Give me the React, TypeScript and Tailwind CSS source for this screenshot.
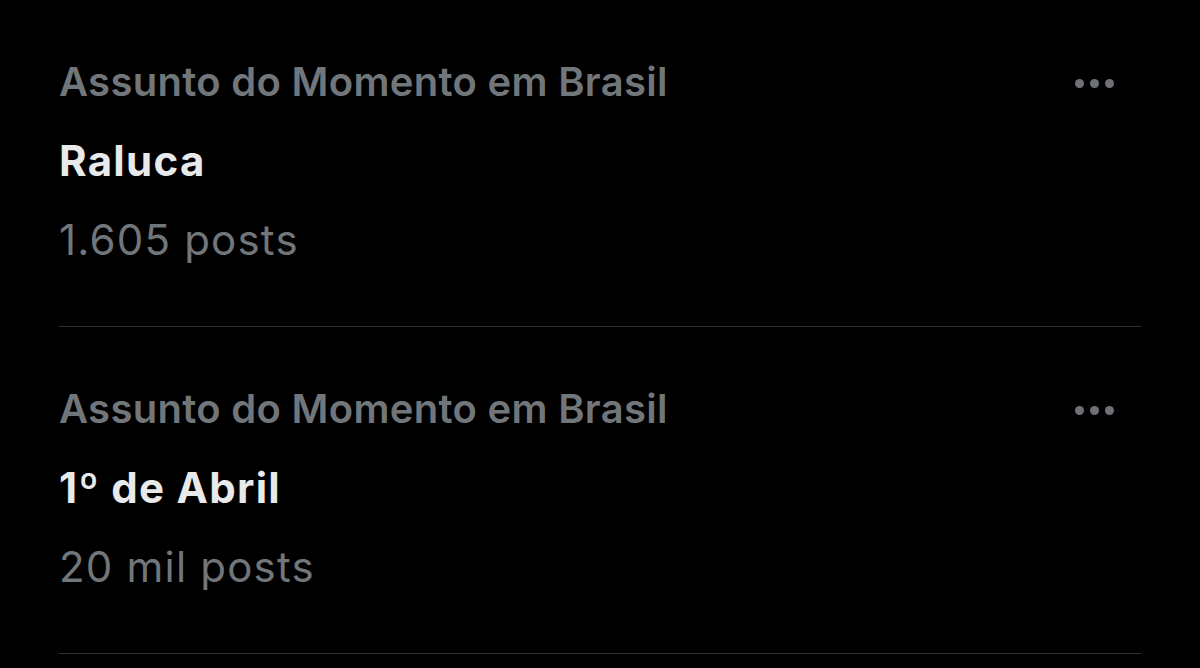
const trends = [
  { category: 'Assunto do Momento em Brasil', title: 'Raluca', count: '1.605 posts' },
  { category: 'Assunto do Momento em Brasil', title: '1º de Abril', count: '20 mil posts' },
];

function MoreDots() {
  return (
    <svg width="39" height="9" viewBox="0 0 39 9" fill="#6e7276">
      <circle cx="4.5" cy="4.5" r="4.5" />
      <circle cx="19.5" cy="4.5" r="4.5" />
      <circle cx="34.5" cy="4.5" r="4.5" />
    </svg>
  );
}

export default function App() {
  return (
    <div
      className="w-[1200px] h-[668px] bg-black overflow-hidden"
      style={{ fontFamily: 'Inter, "Noto Sans", sans-serif' }}
    >
      {trends.map((t, i) => (
        <div key={i} className="mx-[59px] pt-[42px] pb-[47px] border-b border-[#2f3336]">
          <div className="flex items-center justify-between h-[79px]">
            <span className="text-[40px] leading-[79px] font-semibold text-[#71767b] tracking-[0.3px]">
              {t.category}
            </span>
            <div className="mr-[27px] mt-[3px]">
              <MoreDots />
            </div>
          </div>
          <div className="text-[42px] leading-[79px] font-bold text-[#e7e9ea] tracking-[1.3px]">
            {t.title}
          </div>
          <div className="text-[42px] leading-[79px] font-normal text-[#71767b] tracking-[1.2px]">
            {t.count}
          </div>
        </div>
      ))}
    </div>
  );
}
